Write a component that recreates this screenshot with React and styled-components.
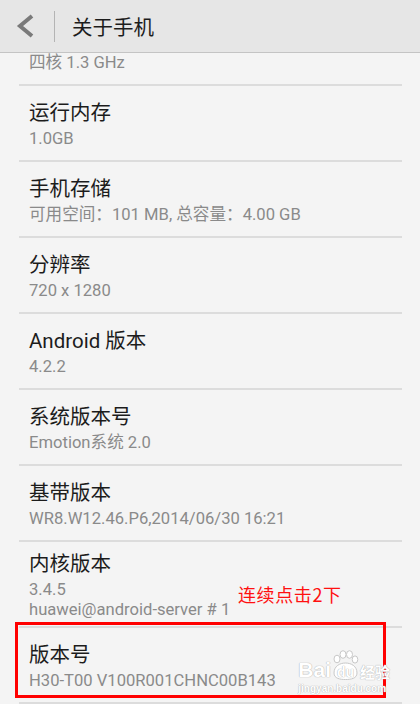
import React from "react";
import styled, { createGlobalStyle } from "styled-components";

const GlobalStyle = createGlobalStyle`
  html, body {
    margin: 0;
    padding: 0;
    background: #f4f4f4;
  }
  body {
    font-family: Roboto, "Noto Sans CJK SC", sans-serif;
  }
`;

const Screen = styled.div`
  position: relative;
  width: 420px;
  height: 704px;
  overflow: hidden;
  display: flex;
  flex-direction: column;
  background: #f4f4f4;
`;

const ActionBar = styled.header`
  flex: 0 0 auto;
  height: 52px;
  display: flex;
  align-items: center;
  background: #e6e6e6;
  border-bottom: 1px solid #c4c4c4;
`;

const BackButton = styled.div`
  width: 54px;
  height: 100%;
  display: flex;
  align-items: center;
  justify-content: center;
  padding-right: 2px;
  box-sizing: border-box;
`;

const Separator = styled.div`
  width: 1px;
  height: 31px;
  background: #b4b4b4;
`;

const BarTitle = styled.h1`
  margin: 0 0 0 17px;
  font-family: "Noto Sans CJK SC", sans-serif;
  font-weight: 400;
  font-size: 20.5px;
  line-height: 28px;
  color: #1c1c1c;
`;

const Viewport = styled.div`
  flex: 1;
  overflow: hidden;
`;

const List = styled.ul`
  list-style: none;
  margin: 0 18px 0 19px;
  padding: 0;
`;

const rowPadding = {
  partial: "0 0 11px 10px",
  dense: "8px 0 6px 10px",
  normal: "13px 0 11px 10px",
};

const Row = styled.li`
  padding: ${(p) => rowPadding[p.$variant]};
  border-bottom: 2px solid #dcdcdc;
`;

const Title = styled.div`
  font-family: Roboto, "Noto Sans CJK SC", sans-serif;
  font-size: 20.5px;
  line-height: 28px;
  color: #1c1c1c;
`;

const Summary = styled.div`
  display: flex;
  flex-direction: column;
  margin-top: ${(p) => (p.$flush ? 0 : 2)}px;
  font-family: Roboto, "Noto Sans CJK SC", sans-serif;
  font-size: 16.6px;
  line-height: 20px;
  color: #8a8a8a;
  white-space: nowrap;
`;

const Note = styled.div`
  position: absolute;
  left: 238px;
  top: 582px;
  font-family: "Noto Sans CJK SC", sans-serif;
  font-size: 18px;
  line-height: 25px;
  color: #ff1010;
  letter-spacing: 0.6px;
`;

const Highlight = styled.div`
  position: absolute;
  left: 15px;
  top: 622px;
  width: 365px;
  height: 70px;
  border: 3px solid #ff0000;
`;

const Watermark = styled.div`
  position: absolute;
  right: 30px;
  bottom: 10px;
  display: flex;
  flex-direction: column;
  align-items: flex-start;
  gap: 4px;
  pointer-events: none;
`;

const MarkLine = styled.div`
  display: flex;
  align-items: flex-end;
`;

const MarkWord = styled.span`
  font-family: ${(p) => (p.$cjk ? '"Noto Sans CJK SC"' : '"Liberation Sans"')}, sans-serif;
  font-weight: 700;
  font-size: ${(p) => p.$size}px;
  line-height: ${(p) => (p.$cjk ? 1.15 : 1)};
  color: #ffffff;
  text-shadow: 0 0 1px #b4b4b4, 0 0 1px #b4b4b4;
  white-space: nowrap;
`;

const PawBox = styled.div`
  position: relative;
  width: 27px;
  height: 30px;
  display: flex;
  align-items: flex-end;
  justify-content: center;
  padding-bottom: 1px;
  box-sizing: border-box;
  margin: 0 1px;

  svg {
    position: absolute;
    inset: 0;
  }
  span {
    position: relative;
  }
`;

const items = [
  { summary: ["四核 1.3 GHz"], variant: "partial" },
  { title: "运行内存", summary: ["1.0GB"] },
  { title: "手机存储", summary: ["可用空间：101 MB, 总容量：4.00 GB"] },
  { title: "分辨率", summary: ["720 x 1280"] },
  { title: "Android 版本", summary: ["4.2.2"] },
  { title: "系统版本号", summary: ["Emotion系统 2.0"] },
  { title: "基带版本", summary: ["WR8.W12.46.P6,2014/06/30 16:21"] },
  { title: "内核版本", summary: ["3.4.5", "huawei@android-server # 1"], variant: "dense" },
  { title: "版本号", summary: ["H30-T00 V100R001CHNC00B143"] },
];

const BackIcon = () => (
  <svg width="20" height="26" viewBox="0 0 20 26">
    <polyline
      points="16,3 4,13 16,23"
      fill="none"
      stroke="#7a7a7a"
      strokeWidth="4"
      strokeLinejoin="miter"
    />
  </svg>
);

const Paw = () => (
  <svg width="27" height="30" viewBox="0 0 27 30">
    <g fill="#ffffff" stroke="#c8c8c8" strokeWidth="1">
      <ellipse cx="5" cy="9" rx="3" ry="3.8" />
      <ellipse cx="11" cy="4.5" rx="3" ry="3.8" />
      <ellipse cx="17.5" cy="4.5" rx="3" ry="3.8" />
      <ellipse cx="23" cy="9.5" rx="2.8" ry="3.6" />
      <path d="M2 23 C2 16 8 13 13.5 13 C19 13 25 16 25 23 C25 28.5 19 29.5 13.5 29.5 C8 29.5 2 28.5 2 23 Z" />
    </g>
  </svg>
);

export default function App() {
  return (
    <>
      <GlobalStyle />
      <Screen>
        <ActionBar>
          <BackButton>
            <BackIcon />
          </BackButton>
          <Separator />
          <BarTitle>关于手机</BarTitle>
        </ActionBar>
        <Viewport>
          <List>
            {items.map((item) => (
              <Row key={item.summary[0]} $variant={item.variant || "normal"}>
                {item.title && <Title>{item.title}</Title>}
                <Summary $flush={!item.title}>
                  {item.summary.map((line) => (
                    <span key={line}>{line}</span>
                  ))}
                </Summary>
              </Row>
            ))}
          </List>
        </Viewport>
        <Note>连续点击2下</Note>
        <Highlight />
        <Watermark>
          <MarkLine>
            <MarkWord $size={21}>Bai</MarkWord>
            <PawBox>
              <Paw />
              <MarkWord $size={14}>du</MarkWord>
            </PawBox>
            <MarkWord $size={15} $cjk>经验</MarkWord>
          </MarkLine>
          <MarkWord $size={10}>jingyan.baidu.com</MarkWord>
        </Watermark>
      </Screen>
    </>
  );
}
